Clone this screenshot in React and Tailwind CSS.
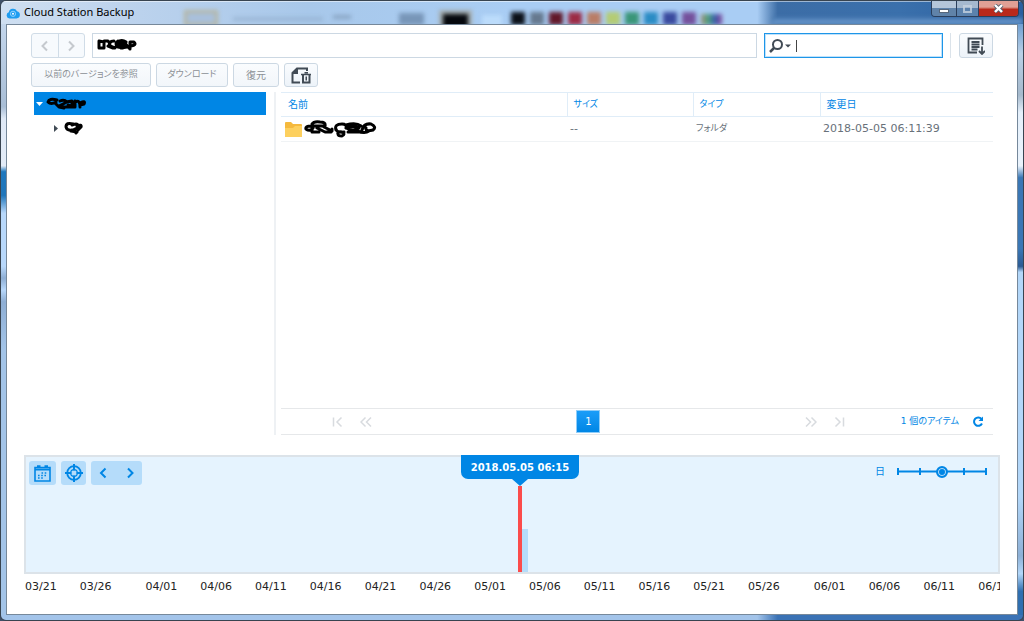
import { useState } from "react";

const DATES = [
  { label: "03/21", days: 5 },
  { label: "03/26", days: 6 },
  { label: "04/01", days: 5 },
  { label: "04/06", days: 5 },
  { label: "04/11", days: 5 },
  { label: "04/16", days: 5 },
  { label: "04/21", days: 5 },
  { label: "04/26", days: 5 },
  { label: "05/01", days: 5 },
  { label: "05/06", days: 5 },
  { label: "05/11", days: 5 },
  { label: "05/16", days: 5 },
  { label: "05/21", days: 5 },
  { label: "05/26", days: 6 },
  { label: "06/01", days: 5 },
  { label: "06/06", days: 5 },
  { label: "06/11", days: 5 },
  { label: "06/16", days: 2 },
];

const SWATCHES = [
  "#0b1018",
  "#66798f",
  "#62182a",
  "#9c2b45",
  "#b97d66",
  "#b4cc74",
  "#3a9678",
  "#2b8cc4",
  "#3a4a9e",
  "#74509c",
];

const Scribble = ({ d, width, height }) => (
  <svg
    width={width}
    height={height}
    viewBox={`0 0 ${width} ${height}`}
    fill="none"
    stroke="#000"
    strokeWidth="3"
    strokeLinecap="round"
    strokeLinejoin="round"
    aria-hidden="true"
  >
    <path d={d} />
  </svg>
);

const Chevron = ({ d, size = 12, weight = 2 }) => (
  <svg
    width={size}
    height={size}
    viewBox="0 0 12 12"
    fill="none"
    stroke="currentColor"
    strokeWidth={weight}
    aria-hidden="true"
  >
    <path d={d} />
  </svg>
);

const TitleBar = () => (
  <header className="relative flex h-[23px] justify-between overflow-hidden bg-[linear-gradient(90deg,#cfdff1_0%,#bdd3ed_12%,#a8c8ea_30%,#a9cdf4_50%,#a9cdf4_74%,#3c6da6_76%,#3a70ac_88%,#2a5f9f_100%)]">
    {/* blurred desktop seen through the glass */}
    <div className="absolute inset-0 blur-[2px]" aria-hidden="true">
      <div className="absolute top-[9px] left-[183px] h-[16px] w-[34px] border-3 border-[#b5b5a0] bg-[#a9c0dc]" />
      <div className="absolute top-[16px] left-[232px] h-[4px] w-[90px] bg-[#8fabc9]/60" />
      <div className="absolute top-[14px] left-[332px] h-[4px] w-[18px] bg-[#7d97b5]/70" />
      <div className="absolute top-[12px] left-[398px] h-[12px] w-[25px] bg-[#7896b8]" />
      <div className="absolute top-[9px] left-[438px] h-[18px] w-[33px] bg-[#a5adae]" />
      <div className="absolute top-[13px] left-[442px] h-[14px] w-[25px] bg-[#05080d]" />
      <div className="absolute top-[14px] left-[481px] h-[12px] w-[20px] bg-[#bcdcfb]" />
      <div className="absolute top-[11px] left-[510px] flex gap-[5px]">
        {SWATCHES.map((color) => (
          <div key={color} className="h-[13px] w-[14px]" style={{ background: color }} />
        ))}
      </div>
      <div className="absolute top-[13px] left-[700px] h-[11px] w-[21px] bg-[linear-gradient(90deg,#a58d7c,#4ea27d,#395dab,#8c4b9c)]" />
      <div className="absolute right-0 bottom-0 h-[7px] w-[250px] bg-linear-to-b from-[#3c6da6] to-[#7fadde]" />
    </div>
    <div className="absolute inset-x-0 top-0 h-px bg-white/50" />
    <div className="relative flex items-center gap-1 pl-[5px]">
      <svg width="14" height="12" viewBox="0 0 14 12" aria-hidden="true">
        <path
          d="M3.500 11.500a3.200 3.200 0 0 1-.7-6.200A4.400 4.400 0 0 1 11 4.200a3.700 3.700 0 0 1-.5 7.300z"
          fill="#1d9cf0"
        />
        <circle cx="7" cy="6.800" r="2.600" fill="none" stroke="#8fd2ff" />
        <circle cx="7" cy="6.800" r="1" fill="#fff" />
      </svg>
      <h1 className="font-['Noto_Sans','DejaVu_Sans',sans-serif] text-[11px] text-black">
        Cloud Station Backup
      </h1>
    </div>
    <div className="relative mr-[4px] flex h-[16px] overflow-hidden rounded-b-[4px] border border-t-0 border-[#2b3f5c]">
      <button
        type="button"
        aria-label="最小化"
        className="flex w-[25px] items-end justify-center border-r border-[#2b3f5c] bg-linear-to-b from-[#b5c6d9] from-45% to-[#6083a9] to-50% pb-[3px]"
      >
        <span className="h-[4px] w-[10px] border border-[#57677b] bg-white" />
      </button>
      <button
        type="button"
        aria-label="最大化"
        className="flex w-[22px] items-center justify-center border-r border-[#2b3f5c] bg-linear-to-b from-[#a5b9cf] from-45% to-[#5b82ad] to-50%"
      >
        <span className="h-[8px] w-[9px] border-2 border-[#c5d2df]/80" />
      </button>
      <button
        type="button"
        aria-label="閉じる"
        className="flex w-[39px] items-center justify-center bg-linear-to-b from-[#e0a095] from-40% to-[#b8291b] to-55%"
      >
        <svg width="11" height="9" viewBox="0 0 11 9" aria-hidden="true">
          <path d="M2 1l7 7M9 1L2 8" stroke="#54606f" strokeWidth="4" />
          <path d="M2 1l7 7M9 1L2 8" stroke="#fff" strokeWidth="2.400" />
        </svg>
      </button>
    </div>
  </header>
);

const NavBar = () => {
  const [query, setQuery] = useState("");

  return (
    <div className="flex h-[25px] items-stretch">
      <div className="flex w-[54px] shrink-0 rounded-[3px] border border-[#d0dce7] bg-[#f7fafd] text-[#c5c9ce]">
        <button
          type="button"
          aria-label="戻る"
          className="flex flex-1 items-center justify-center border-r border-[#d0dce7]"
        >
          <Chevron d="M8 1.500L3.500 6L8 10.500" />
        </button>
        <button type="button" aria-label="進む" className="flex flex-1 items-center justify-center">
          <Chevron d="M4 1.500L8.500 6L4 10.500" />
        </button>
      </div>
      <div className="relative ml-[7px] flex min-w-0 flex-1">
        <input
          type="text"
          aria-label="パス"
          readOnly
          className="w-full border border-[#ccd8e3] bg-white px-2 outline-none"
        />
        <div className="pointer-events-none absolute top-[5px] left-[4px]">
          <Scribble
            width={42}
            height={14}
            d="M3 3v7h5V4L3 3M8 3h4l2 3M18 3q-6 0-4 5l5 2 2-3M22 3q-4 3 0 6l5 1M21 4q5-3 9 0l-7 2 8 3-6 1M28 4l5 6M34 11V4h4q3 3-3 4M12 8l5 2"
          />
        </div>
      </div>
      <div className="ml-[7px] flex w-[179px] shrink-0 items-center border border-[#1e96e8] bg-white outline outline-[#bfe2fb] -outline-offset-2">
        <button type="button" aria-label="検索オプション" className="flex items-center gap-[2px] pl-[4px]">
          <svg width="14" height="14" viewBox="0 0 14 14" fill="none" stroke="#414b55" aria-hidden="true">
            <circle cx="8.500" cy="5.500" r="4.500" strokeWidth="2" />
            <path d="M5 9L1 13" strokeWidth="2.500" />
          </svg>
          <svg width="6" height="4" viewBox="0 0 6 4" fill="#414b55" aria-hidden="true">
            <path d="M0 .5h6L3 3.500z" />
          </svg>
        </button>
        <span className="ml-[5px] h-[12px] w-px bg-[#444]" aria-hidden="true" />
        <input
          type="text"
          aria-label="検索"
          value={query}
          onChange={(e) => setQuery(e.target.value)}
          className="min-w-0 flex-1 bg-transparent text-[11px] outline-none"
        />
      </div>
      <div className="ml-[7px] w-px shrink-0 bg-[#dbe3ea]" />
      <button
        type="button"
        aria-label="タスク一覧"
        className="ml-[8px] flex w-[34px] shrink-0 items-center justify-center rounded-[3px] border border-[#ccd8e3] bg-linear-to-b from-[#fafcfe] to-[#edf3f9]"
      >
        <svg width="18" height="18" viewBox="0 0 18 18" fill="none" stroke="#414b55" strokeWidth="1.800" aria-hidden="true">
          <path d="M15.500 8V1.500H1.500v14H10M4.500 5h8M4.500 7.500h8M4.500 10h8M4.500 12.500h6M15 9.500V17M12 14l3 3 3-3" />
        </svg>
      </button>
    </div>
  );
};

const ToolButton = ({ className, children }) => (
  <button
    type="button"
    disabled
    className={`rounded-[3px] border border-[#ccd8e3] bg-linear-to-b from-[#fafcfe] to-[#f2f6fa] whitespace-nowrap text-[#8b9096] ${className}`}
  >
    {children}
  </button>
);

const Toolbar = () => (
  <div className="mt-[5px] flex h-[24px] gap-[5px]">
    <ToolButton className="w-[120px] text-[9px]">以前のバージョンを参照</ToolButton>
    <ToolButton className="w-[72px] text-[9px]">ダウンロード</ToolButton>
    <ToolButton className="w-[46px] text-[10px]">復元</ToolButton>
    <button
      type="button"
      aria-label="削除済みファイルを表示"
      className="flex w-[34px] items-center justify-center rounded-[3px] border border-[#ccd8e3] bg-linear-to-b from-[#fafcfe] to-[#edf3f9]"
    >
      <svg width="20" height="17" viewBox="0 0 20 17" fill="none" stroke="#414b55" aria-hidden="true">
        <path d="M16 4V1.500H6L1.500 6v9.500H9" strokeWidth="2" />
        <path d="M7 1v6H1z" fill="#414b55" stroke="none" />
        <path d="M10 7.500h10M13.500 5.800h3.500" strokeWidth="1.500" />
        <path d="M12 8v7.500h6.500V8" strokeWidth="2" />
        <path d="M15.250 9.500v4" strokeWidth="1.500" />
      </svg>
    </button>
  </div>
);

const FolderTree = () => (
  <nav aria-label="フォルダ" className="w-[232px] shrink-0">
    <button type="button" className="flex h-[23px] w-full items-center gap-[3px] bg-[#0086e5] pl-[2px]">
      <svg width="7" height="4" viewBox="0 0 7 4" fill="#fff" aria-hidden="true">
        <path d="M0 0h7L3.500 4z" />
      </svg>
      <Scribble
        width={42}
        height={13}
        d="M11 3Q3 1 2 5q3 3 8 0M9 6l4 4 5 1M14 4q4-2 7 1l-8 4M16 10h10V4l-6 1M22 8l6 2 1-6M29 10V5q5-3 5 5M34 6q6-3 4 1l-4 1"
      />
    </button>
    <button type="button" className="mt-[1px] flex h-[24px] w-full items-center gap-[6px] pl-[20px]">
      <svg width="4" height="7" viewBox="0 0 4 7" fill="#414b55" aria-hidden="true">
        <path d="M0 0v7l4-3.500z" />
      </svg>
      <Scribble width={22} height={14} d="M9 3Q2 1 2 6q1 4 6 3M8 4q8-3 5 3l-4 2 3 3M13 5q5-2 4 1l-3 3M7 10l6 1" />
    </button>
  </nav>
);

const FileTable = () => (
  <table className="w-full table-fixed border-collapse text-left text-[11px]">
    <colgroup>
      <col />
      <col className="w-[126px]" />
      <col className="w-[127px]" />
      <col className="w-[173px]" />
    </colgroup>
    <thead className="text-[10px] text-[#0086e5]">
      <tr className="h-[24px] border-y border-[#e0edf8]">
        <th className="border-r border-[#e0edf8] px-[7px] font-normal">名前</th>
        <th className="border-r border-[#e0edf8] px-[6px] text-[9px] font-normal">サイズ</th>
        <th className="border-r border-[#e0edf8] px-[6px] text-[9px] font-normal">タイプ</th>
        <th className="px-[6px] font-normal">変更日</th>
      </tr>
    </thead>
    <tbody className="text-[#68717a]">
      <tr className="h-[25px] border-b border-[#f0f3f5]">
        <td className="px-[3px]">
          <div className="flex items-center gap-px">
            <svg width="19" height="17" viewBox="0 0 19 17" aria-hidden="true">
              <path d="M1 2q0-1 1-1h5l2 2h8q1 0 1 1v11q0 1-1 1H2q-1 0-1-1z" fill="#f5b93d" />
              <path d="M1 7h8l2-2h7v10q0 1-1 1H2q-1 0-1-1z" fill="#fdd05e" />
            </svg>
            <Scribble
              width={75}
              height={18}
              d="M8 4Q10 1 16 2q6 0 5 4H7Q1 6 2 9q4 3 7-1M8 7v5h7M13 8l8 4h6M20 7l8 4v-2M32 10q-2-6 6-6 5 0 4 4M32 9q1 4 8 3M34 14q-1-3 4-2 4 2 0 4-4 0-4-2M42 5q10-3 15 1M42 8q6-3 13 0-5 4-13 0M44 12h14M58 10q2-7 9-6 6 3 2 6-8 2-7-2M53 11q8 3 12 0"
            />
          </div>
        </td>
        <td className="px-[3px]">--</td>
        <td className="px-[3px] text-[9px]">フォルダ</td>
        <td className="px-[3px]">2018-05-05 06:11:39</td>
      </tr>
    </tbody>
  </table>
);

const Pager = () => (
  <div className="flex h-[27px] items-center border-y border-[#e6e8ea] text-[10px] text-[#0086e5]">
    <nav aria-label="ページ" className="mr-[55px] ml-[50px] flex flex-1 items-center justify-between text-[#d8dbdf]">
      <div className="flex gap-[17px]">
        <button type="button" aria-label="最初のページ">
          <Chevron d="M2.500 1.500v9M10.500 1.500L6 6l4.500 4.500" weight={1.5} />
        </button>
        <button type="button" aria-label="前のページ">
          <Chevron d="M5.500 1.500L1 6l4.500 4.500M11 1.500L6.500 6l4.500 4.500" weight={1.5} />
        </button>
      </div>
      <button
        type="button"
        className="h-[23px] w-[24px] border border-[#8fcdf9] bg-linear-to-b from-[#1a9df8] to-[#0086e5] text-white"
      >
        1
      </button>
      <div className="flex gap-[17px]">
        <button type="button" aria-label="次のページ">
          <Chevron d="M1 1.500L5.500 6L1 10.500M6.500 1.500L11 6l-4.500 4.500" weight={1.5} />
        </button>
        <button type="button" aria-label="最後のページ">
          <Chevron d="M9.500 1.500v9M1.500 1.500L6 6l-4.500 4.500" weight={1.5} />
        </button>
      </div>
    </nav>
    <span className="text-[9px]">1 個のアイテム</span>
    <button type="button" aria-label="更新" className="mr-[9px] ml-[13px]">
      <svg width="12" height="12" viewBox="0 0 12 12" fill="none" stroke="currentColor" strokeWidth="2" aria-hidden="true">
        <path d="M9.500 3A4.200 4.200 0 1 0 10 7.500" />
        <path d="M11 .5v4.500H6.500z" fill="currentColor" stroke="none" />
      </svg>
    </button>
  </div>
);

const Timeline = () => {
  const [scale, setScale] = useState(3);

  return (
    <section aria-label="タイムライン" className="mx-[17px] mt-[20px] mb-[18px]">
      <div className="relative flex h-[119px] items-start justify-between border-2 border-[#dce3e9] bg-[#e5f3fe] py-[4px] pr-[11px] pl-[3px] text-[#0086e5]">
        <div className="flex gap-[5px]">
          <button type="button" aria-label="カレンダー" className="flex h-[24px] w-[27px] items-center justify-center rounded-[3px] bg-[#b5dcfa]">
            <svg width="17" height="17" viewBox="0 0 17 17" fill="none" stroke="currentColor" aria-hidden="true">
              <path d="M1 2.500h15v13.500H1z" strokeWidth="1.600" />
              <path d="M1 4.500h15" strokeWidth="2" />
              <path d="M3 1.500h3.500M10.500 1.500H14" strokeWidth="2.500" />
              <path d="M7.500 8h6M4 10.500h9.500M4 13h5.500" strokeWidth="1.500" strokeDasharray="1.600 1.600" />
            </svg>
          </button>
          <button type="button" aria-label="現在の時刻" className="flex h-[24px] w-[25px] items-center justify-center rounded-[3px] bg-[#b5dcfa]">
            <svg width="18" height="18" viewBox="0 0 18 18" fill="none" stroke="currentColor" aria-hidden="true">
              <circle cx="9" cy="9" r="6.800" strokeWidth="1.800" />
              <circle cx="9" cy="9" r="3.300" strokeWidth="1.200" />
              <path d="M9 0v6.500M9 11.500V18M0 9h6.500M11.500 9H18" strokeWidth="2" />
            </svg>
          </button>
          <div className="flex h-[24px] w-[51px] rounded-[3px] bg-[#b5dcfa]">
            <button type="button" aria-label="前へ" className="flex flex-1 items-center justify-center">
              <Chevron d="M7.500 1.500L3 6l4.500 4.500" />
            </button>
            <button type="button" aria-label="次へ" className="flex flex-1 items-center justify-center">
              <Chevron d="M5 1.500L9.500 6L5 10.500" />
            </button>
          </div>
        </div>

        <div className="mt-[3px] flex items-center gap-[12px] text-[10px]">
          <label htmlFor="scale">日</label>
          <div className="relative h-[13px] w-[90px]">
            <svg width="90" height="13" viewBox="0 0 90 13" stroke="currentColor" aria-hidden="true">
              <path d="M1 6.500h88" strokeWidth="2" />
              <path d="M1 3v7M23 3v7M67 3v7M89 3v7" strokeWidth="2" />
            </svg>
            <input
              id="scale"
              type="range"
              min="1"
              max="5"
              value={scale}
              onChange={(e) => setScale(Number(e.target.value))}
              className="absolute inset-0 m-0 w-full appearance-none bg-transparent [&::-webkit-slider-thumb]:size-[12px] [&::-webkit-slider-thumb]:appearance-none [&::-webkit-slider-thumb]:rounded-full [&::-webkit-slider-thumb]:border-2 [&::-webkit-slider-thumb]:border-[#0086e5] [&::-webkit-slider-thumb]:bg-[#0086e5] [&::-webkit-slider-thumb]:shadow-[inset_0_0_0_1px_#b5dcfa]"
            />
          </div>
        </div>

        {/* current version marker */}
        <div className="absolute bottom-0 left-1/2 ml-[6px] h-[43px] w-[10px] bg-[#b5dcfa]" />
        <div className="absolute -top-[2px] bottom-0 left-1/2 ml-[8px] flex w-[118px] -translate-x-1/2 flex-col items-center">
          <div className="flex h-[24px] w-full shrink-0 items-center justify-center rounded-b-[7px] bg-[#0086e5] text-[10px] font-bold text-white">
            2018.05.05 06:15
          </div>
          <svg width="16" height="7" viewBox="0 0 16 7" fill="#0086e5" className="shrink-0" aria-hidden="true">
            <path d="M0 0h16L8 7z" />
          </svg>
          <div className="w-[4px] flex-1 bg-[#fb4b4b]" />
        </div>
      </div>

      <div className="mt-[4px] flex overflow-hidden pl-px text-[11px] leading-[18px] text-[#222]">
        {DATES.map(({ label, days }) => (
          <div key={label} className="min-w-0 basis-0 whitespace-nowrap" style={{ flexGrow: days }}>
            {label}
          </div>
        ))}
      </div>
    </section>
  );
};

const App = () => {
  return (
    <div className="bg-[#3f5068]">
      <div className="flex min-h-screen flex-col overflow-hidden rounded-[6px] border border-[#384450] font-['DejaVu_Sans','Noto_Sans_CJK_JP',sans-serif] [font-feature-settings:'palt']">
        <TitleBar />
        <div className="flex flex-1">
          <div className="w-[5px] shrink-0 bg-[linear-gradient(180deg,#c3d6ec_0%,#a9bed6_14%,#dfe9f6_16%,#e3ecf8_24%,#1e78be_25%,#2076ba_29%,#b8d8fb_32%,#b8d8fb_41%,#8eaed4_43%,#b8d8fb_45%,#8eaed4_47%,#a3c4e8_55%,#a3c4e8_100%)]" />
          <main className="flex min-w-0 flex-1 flex-col border border-[#76889a] bg-white">
            <div className="flex flex-1 flex-col px-[24px] pt-[8px]">
              <NavBar />
              <Toolbar />
              <div className="mt-[5px] flex flex-1 pl-[3px]">
                <FolderTree />
                <div className="ml-[8px] w-[2px] shrink-0 bg-[#eef1f4]" />
                <div className="ml-[5px] flex min-w-0 flex-1 flex-col">
                  <FileTable />
                  <div className="mt-auto">
                    <Pager />
                  </div>
                </div>
              </div>
            </div>
            <Timeline />
          </main>
          <div className="w-[5px] shrink-0 bg-[linear-gradient(180deg,#6f9fd2_0%,#b9d0e6_5%,#a5b9cc_12%,#e5f0fb_15%,#eaf3fc_24%,#3a77b5_26%,#3a77b5_38%,#2c5b93_41%,#b3d7f9_42%,#b3d7f9_80%,#8db0d6_90%,#b3d7f9_93%,#2f6fb0_96%,#2f6fb0_100%)]" />
        </div>
        <div className="h-[5px] bg-[linear-gradient(90deg,#a3c4ea_0%,#a3c4ea_74%,#3a72b5_76%,#3a72b5_100%)]" />
      </div>
    </div>
  );
};

export default App;
